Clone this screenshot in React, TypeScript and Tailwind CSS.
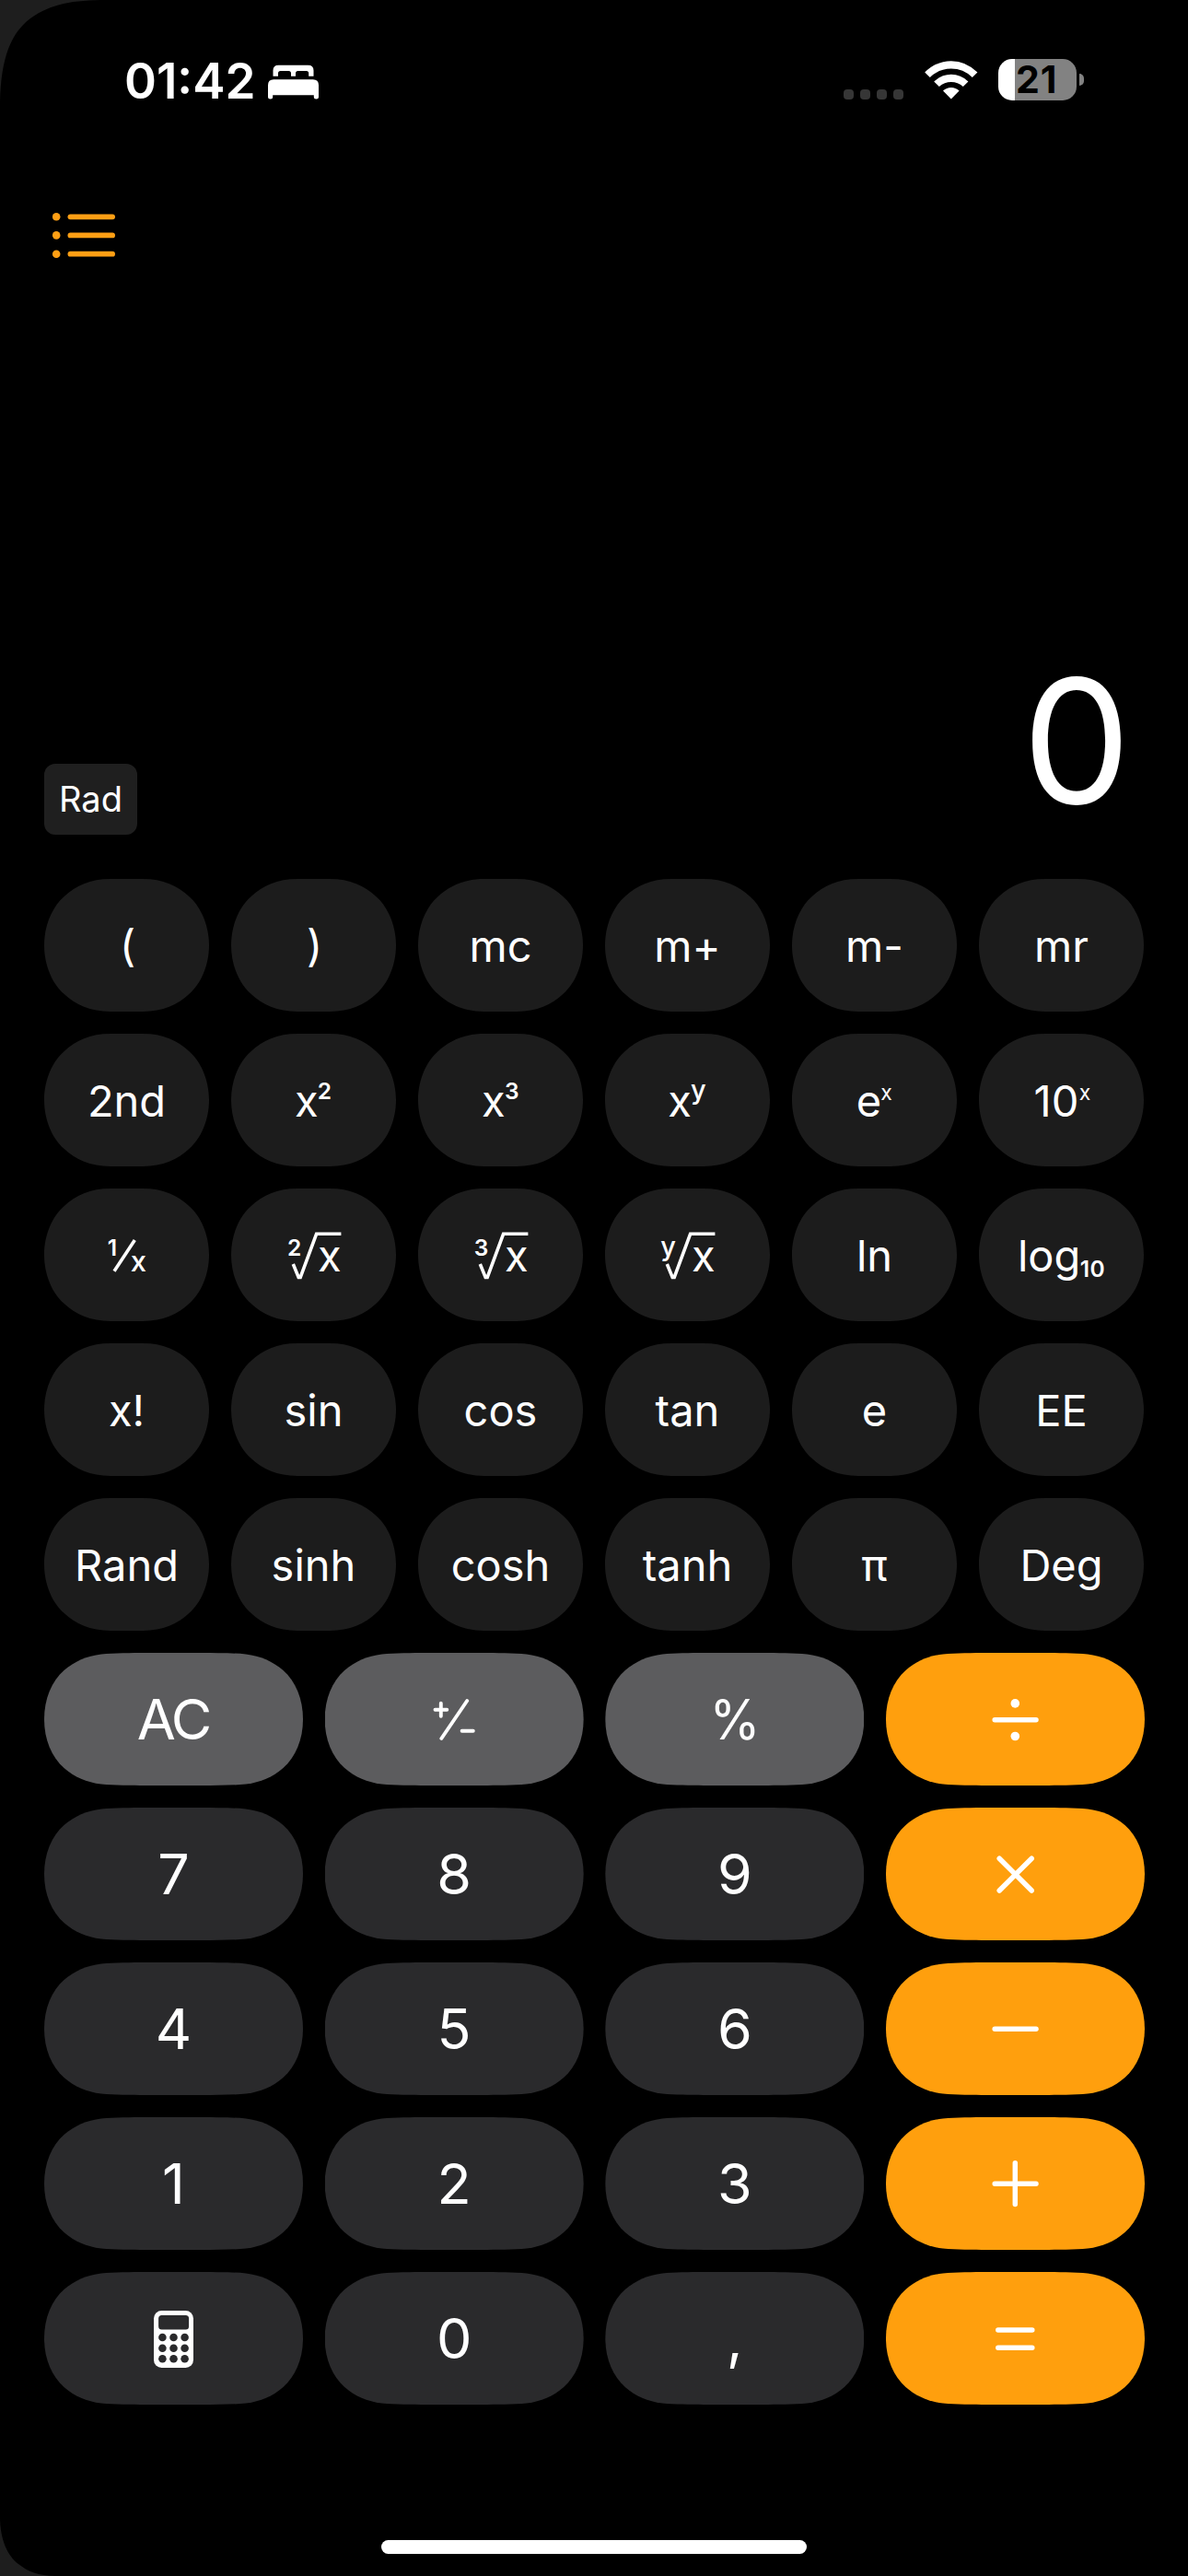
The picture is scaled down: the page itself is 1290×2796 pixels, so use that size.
import type { ReactNode } from "react";

type Tone = "sci" | "gray" | "dark" | "orange";

const TONES: Record<Tone, string> = {
  sci: "bg-[#1c1c1c]",
  gray: "bg-[#5c5c5e]",
  dark: "bg-[#2a2a2c]",
  orange: "bg-[#ff9f0d]",
};

/* ---------- labels drawn on a 179x144 key ---------- */

function SciArt({ children }: { children: ReactNode }) {
  return (
    <svg width="179" height="144" viewBox="0 0 179 144" fill="#fff" textAnchor="middle" className="block">
      {children}
    </svg>
  );
}

function Power({ base, exp, x, ex, ey, size, weight = 600 }: { base: string; exp: string; x: number; ex: number; ey: number; size: number; weight?: number }) {
  return (
    <SciArt>
      <text x={x} y="90" fontSize="47">{base}</text>
      <text x={ex} y={ey} fontSize={size} fontWeight={weight}>{exp}</text>
    </SciArt>
  );
}

function Root({ index, size, weight = 600 }: { index: string; size: number; weight?: number }) {
  return (
    <SciArt>
      <text x="68.6" y="73.3" fontSize={size} fontWeight={weight}>{index}</text>
      <path d="M67.3 82L73.2 96.4H75.2L92.6 49.3H119.4" fill="none" stroke="#fff" strokeWidth="3.6" />
      <text x="106.8" y="89.7" fontSize="47">x</text>
    </SciArt>
  );
}

const SCI: ReactNode[] = [
  <span className="pl-[2px]">(</span>,
  <span className="pl-[2px]">)</span>,
  "mc", "m+", "m-", "mr",
  "2nd",
  <Power base="x" exp="2" x={81.8} ex={101.5} ey={71.3} size={24.5} />,
  <Power base="x" exp="3" x={81.8} ex={101.7} ey={71.3} size={24.5} />,
  <Power base="x" exp="y" x={81} ex={101.3} ey={71.3} size={29} weight={500} />,
  <Power base="e" exp="x" x={83.5} ex={102.6} ey={72.3} size={23} weight={400} />,
  <Power base="10" exp="x" x={84} ex={115} ey={72.3} size={23} weight={400} />,
  <SciArt>
    <text x="74" y="73.3" fontSize="24.5" fontWeight="600">1</text>
    <path d="M76 89.7L98.3 56" stroke="#fff" strokeWidth="3.6" />
    <text x="102.3" y="89.7" fontSize="31" fontWeight="500">x</text>
  </SciArt>,
  <Root index="2" size={24.5} />,
  <Root index="3" size={24.5} />,
  <Root index="y" size={29} weight={500} />,
  "ln",
  <SciArt>
    <text x="76.1" y="89.7" fontSize="47">log</text>
    <text x="123.2" y="95.5" fontSize="24.5" fontWeight="600" textLength="27">10</text>
  </SciArt>,
  "x!", "sin", "cos", "tan", "e", "EE",
  "Rand", "sinh", "cosh", "tanh", "π", "Deg",
];

/* ---------- symbols drawn on a 280x144 key ---------- */

function KeyArt({ children, width = 5.5 }: { children: ReactNode; width?: number }) {
  return (
    <svg width="280.5" height="144" viewBox="0 0 280.5 144" fill="none" stroke="#fff" strokeWidth={width} strokeLinecap="round" className="block">
      {children}
    </svg>
  );
}

const PlusMinus = (
  <KeyArt width={3.9}>
    <path d="M119.5 61.8H132.3M125.8 54.8V68.8M148.6 84.7H160.8M126.3 93L154.2 52" />
  </KeyArt>
);

const Percent = (
  <KeyArt>
    <text x="140" y="94.3" textAnchor="middle" fontSize="60" fontWeight="400" fill="#fff" stroke="none" textLength="55" lengthAdjust="spacingAndGlyphs">%</text>
  </KeyArt>
);

const Divide = (
  <KeyArt>
    <path d="M118.2 72.7H163" />
    <circle cx="140.3" cy="54.9" r="4.8" fill="#fff" stroke="none" />
    <circle cx="140.3" cy="90.5" r="4.8" fill="#fff" stroke="none" />
  </KeyArt>
);

const Times = <KeyArt><path d="M123.2 55.2L158.2 90M158.2 55.2L123.2 90" /></KeyArt>;
const Minus = <KeyArt><path d="M118.2 72.2H163" /></KeyArt>;
const Plus = <KeyArt><path d="M118.2 72.2H163M140.3 49.8V94.4" /></KeyArt>;
const Equals = <KeyArt><path d="M121.8 63H158.8M121.8 82.2H158.8" /></KeyArt>;

const CalculatorIcon = (
  <KeyArt>
    <g stroke="none">
      <rect x="119" y="42" width="43" height="62" rx="8.5" fill="#fff" />
      <rect x="124.1" y="47" width="33" height="15.5" rx="3.5" fill="#2a2a2c" />
      {[71, 82.7, 94.3].map((cy) =>
        [128.4, 140.5, 152.6].map((cx) => <circle key={`${cx}-${cy}`} cx={cx} cy={cy} r="4.3" fill="#2a2a2c" />),
      )}
    </g>
  </KeyArt>
);

const MAIN: { tone: Tone; label: ReactNode }[] = [
  { tone: "gray", label: <span className="pr-[1px] tracking-[-3px]">AC</span> }, { tone: "gray", label: PlusMinus }, { tone: "gray", label: Percent }, { tone: "orange", label: Divide },
  { tone: "dark", label: "7" }, { tone: "dark", label: "8" }, { tone: "dark", label: "9" }, { tone: "orange", label: Times },
  { tone: "dark", label: "4" }, { tone: "dark", label: "5" }, { tone: "dark", label: "6" }, { tone: "orange", label: Minus },
  { tone: "dark", label: "1" }, { tone: "dark", label: "2" }, { tone: "dark", label: "3" }, { tone: "orange", label: Plus },
  { tone: "dark", label: CalculatorIcon }, { tone: "dark", label: "0" }, { tone: "dark", label: "," }, { tone: "orange", label: Equals },
];

/* Continuous-corner key outlines */
const SMALL_SHAPE =
  "[clip-path:path('M0_72C0_50_9_30_21.5_19.2C34_7.5_50_0_72_0H107C129_0_145_7.5_157.5_19.2C170_30_179_50_179_72C179_94_170_114_157.5_124.8C145_136.5_129_144_107_144H72C50_144_34_136.5_21.5_124.8C9_114_0_94_0_72Z')]";
const LARGE_SHAPE =
  "[clip-path:path('M0_72C0_50_8_31_21.5_19C33_9_46_3.5_62_1.4C76_0.2_95_0_110_0H171C186_0_205_0.2_219_1.4C235_3.5_248_9_259.5_19C273_31_281_50_281_72C281_94_273_113_259.5_125C248_135_235_140.5_219_142.6C205_143.8_186_144_171_144H110C95_144_76_143.8_62_142.6C46_140.5_33_135_21.5_125C8_113_0_94_0_72Z')]";

function StatusBar() {
  return (
    <header className="flex h-[174px] items-start justify-between pl-[135px] pr-[113px] pt-[56px]">
      <div className="flex items-center">
        <span className="w-[156px] whitespace-nowrap text-[53px] leading-[64px] font-semibold">01:42</span>
        <svg width="55" height="38" viewBox="0 0 55 38" className="mt-px" fill="#fff">
          <path d="M5.5 12.7V6.5Q5.5 0.7 11.5 0.7H43.5Q49.5 0.7 49.5 6.5V12.7H44.2V9.5Q44.2 7 41.7 7H32.5Q30 7 30 9.5V12.7H25V9.5Q25 7 22.5 7H13.5Q11 7 11 9.5V12.7Z" />
          <path d="M0 35V22.5Q0 16.3 6.2 16.3H48.8Q55 16.3 55 22.5V35Q55 37.5 52.4 37.5Q49.8 37.5 49.8 35V33.3H5.2V35Q5.2 37.5 2.6 37.5Q0 37.5 0 35Z" />
        </svg>
      </div>
      <div className="flex items-center pt-[8px]">
        <div className="mt-[31px] flex gap-[7px]">
          {[0, 1, 2, 3].map((i) => (
            <span key={i} className="size-[11px] rounded-[4px] bg-[#363636]" />
          ))}
        </div>
        <svg width="58" height="43" viewBox="0 0 58 43" className="ml-[23px]" fill="#fff">
          <path d="M0.2 13.6Q12.5 1.2 28.8 1.2T57.4 13.6L51.8 19Q42 9.6 28.8 9.6T5.8 19Z" />
          <path d="M10.2 23.5Q18.3 15.8 28.8 15.8T47.4 23.5L41.8 29Q36 24 28.8 24T15.8 29Z" />
          <path d="M20 33.6Q23.8 30 28.8 30T37.6 33.6L28.8 42.6Z" />
        </svg>
        <div className="ml-[22px] flex h-[45px] w-[85px] items-center rounded-[15px] bg-[linear-gradient(90deg,#fff_18px,#828282_18px)] pl-[19px]">
          <span className="text-[41px] leading-[45px] font-bold tracking-[1px] text-black">21</span>
        </div>
        <span className="ml-[3px] h-[13px] w-[5px] rounded-r-[5px] bg-[#828282]" />
      </div>
    </header>
  );
}

export default function App() {
  return (
    <main className="relative flex h-[2796px] w-[1290px] flex-col overflow-hidden bg-black font-['Inter',sans-serif] text-white">
      <StatusBar />

      <div className="flex h-[655px] items-start pl-[57px] pt-[57px]">
        <svg width="68" height="49" viewBox="0 0 68 49" fill="#ff9f14">
          {[4.3, 24.4, 44.7].map((y) => (
            <g key={y}>
              <circle cx="4.2" cy={y} r="4.3" />
              <rect x="16.5" y={y - 2.9} width="51.5" height="5.8" rx="2.9" />
            </g>
          ))}
        </svg>
      </div>

      <div className="flex h-[125px] items-start justify-between pl-[48px] pr-[62px]">
        <span className="flex h-[77px] w-[101px] items-center justify-center rounded-[12px] bg-[#1f1f1f] text-[38px]">Rad</span>
        <span className="mt-[-137px] text-[187px] leading-[225px]">0</span>
      </div>

      <div className="mx-[48px] grid grid-cols-6 gap-[24px]">
        {SCI.map((label, i) => (
          <button key={i} className={`flex h-[144px] items-center justify-center whitespace-nowrap text-[47px] leading-[58px] ${TONES.sci} ${SMALL_SHAPE}`}>
            {typeof label === "string" ? <span className="pt-[2px]">{label}</span> : label}
          </button>
        ))}
      </div>

      <div className="ml-[48px] mr-[47px] mt-[24px] grid grid-cols-[repeat(4,281px)] justify-between gap-y-[24px]">
        {MAIN.map(({ tone, label }, i) => (
          <button key={i} className={`flex h-[144px] items-center justify-center text-[61px] leading-[72px] ${TONES[tone]} ${LARGE_SHAPE}`}>
            {label}
          </button>
        ))}
      </div>

      <div className="mx-auto mt-[147px] h-[15px] w-[462px] shrink-0 rounded-full bg-white" />

      <svg width="116" height="112" viewBox="0 0 116 112" className="absolute left-0 top-0" fill="#1e1e1e">
        <path d="M0 0H115C80 0 55 4 33 20C12 36 1 62 0 112Z" />
      </svg>
      <svg width="60" height="64" viewBox="0 0 60 64" className="absolute bottom-0 left-0" fill="#1e1e1e">
        <path d="M0 0C0 24 8 42 20 51C30 59 42 64 60 64H0Z" />
      </svg>
    </main>
  );
}
